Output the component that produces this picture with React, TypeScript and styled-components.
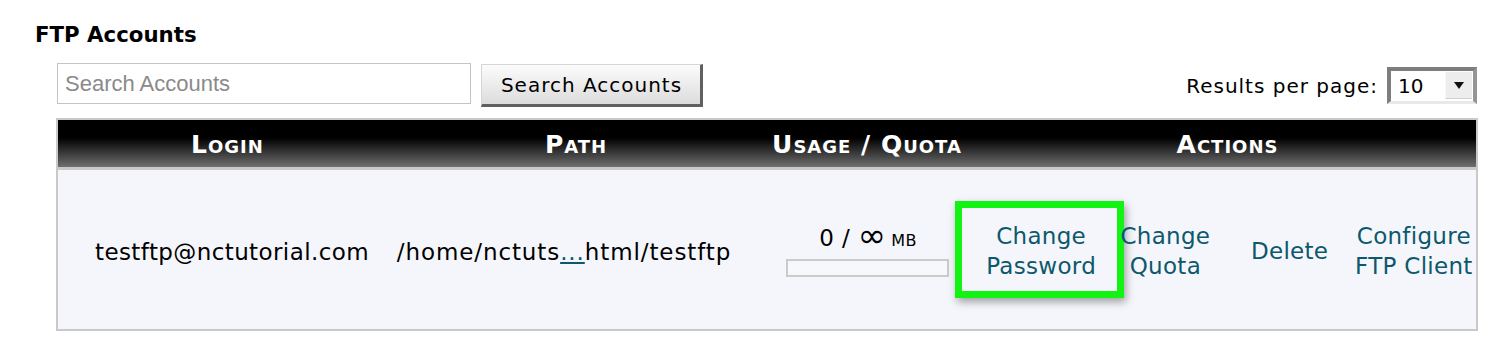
import React from 'react';
import styled, { createGlobalStyle } from 'styled-components';

const GlobalStyle = createGlobalStyle`
  html, body { margin: 0; padding: 0; background: #ffffff; }
  body { font-family: "DejaVu Sans", Verdana, sans-serif; color: #000; }
`;

const Page = styled.div`
  width: 1506px;
  height: 364px;
  box-sizing: border-box;
  padding-top: 22px;
  overflow: hidden;
`;

const Title = styled.h2`
  margin: 0 0 0 35px;
  font: bold 21.3px/26px "DejaVu Sans", Verdana, sans-serif;
  color: #000;
`;

const Content = styled.div`
  margin-left: 56px;
  width: 1422px;
`;

const Toolbar = styled.div`
  display: flex;
  align-items: center;
  height: 44px;
  margin-top: 15px;
  padding: 0 1px;
`;

const SearchInput = styled.input`
  box-sizing: border-box;
  width: 414px;
  height: 41px;
  margin: 0 0 3px 0;
  border: 1px solid #c4c4c4;
  padding: 0 7px;
  font: 22px "Liberation Sans", Arial, sans-serif;
  color: #000;
  background: #fff;
  outline: none;
  &::placeholder { color: #8a8a8a; opacity: 1; }
`;

const SearchButton = styled.button`
  box-sizing: border-box;
  width: 222px;
  height: 43px;
  margin-left: 10px;
  padding: 2px 0 0 1px;
  border-style: solid;
  border-width: 1px 3px 3px 1px;
  border-color: #d6d6d6 #606060 #606060 #d6d6d6;
  background: linear-gradient(#fcfcfc, #dcdcdc);
  font: 20px "DejaVu Sans", Verdana, sans-serif;
  letter-spacing: 1px;
  color: #000;
`;

const PerPage = styled.div`
  margin-left: auto;
  display: flex;
  align-items: center;
  gap: 9px;
`;

const PerPageLabel = styled.span`
  font: 20px "DejaVu Sans", Verdana, sans-serif;
  letter-spacing: 1px;
  padding-top: 2px;
`;

const SelectBox = styled.div`
  box-sizing: border-box;
  width: 90px;
  height: 37px;
  display: flex;
  align-items: center;
  background: #fff;
  border-style: solid;
  border-width: 4px 4px 3px 4px;
  border-color: #7e7e7e #959595 #e9e9e9 #7e7e7e;
`;

const SelectValue = styled.span`
  flex: 1;
  padding-left: 7px;
  font: 20px "DejaVu Sans", Verdana, sans-serif;
`;

const SelectArrow = styled.span`
  box-sizing: border-box;
  width: 27px;
  height: 27px;
  margin-right: 1px;
  display: flex;
  align-items: center;
  justify-content: center;
  background: #ededed;
  border-left: 1px solid #f8f8f8;
  border-bottom: 1px solid #d0d0d0;
`;

const Table = styled.div`
  margin-top: 11px;
  border: 2px solid #c9c9c9;
  display: grid;
  grid-template-columns: 339px 358px 224px 497px;
  background: #f5f6fb;
`;

const HeadCell = styled.div`
  box-sizing: border-box;
  height: 50px;
  padding-top: 2px;
  border-bottom: 3px solid #c9c9c9;
  background: linear-gradient(to bottom, #000 0%, #000 38%, #6f6f6f 100%);
  color: #fff;
  display: flex;
  align-items: center;
  justify-content: center;
  font: bold 25px "DejaVu Sans", Verdana, sans-serif;
  font-variant: small-caps;
  letter-spacing: 1px;
  white-space: nowrap;
`;

const BodyCell = styled.div<{ $padLeft?: number; $padRight?: number; $spacing?: number }>`
  box-sizing: border-box;
  height: 159px;
  display: flex;
  align-items: center;
  justify-content: center;
  padding-top: 6px;
  padding-left: ${(p) => p.$padLeft ?? 0}px;
  padding-right: ${(p) => p.$padRight ?? 0}px;
  font: 23px/27px "DejaVu Sans", Verdana, sans-serif;
  letter-spacing: ${(p) => p.$spacing ?? 0.4}px;
  white-space: nowrap;
  color: #000;
`;

const EllipsisLink = styled.a`
  color: #0d586c;
  text-decoration: underline;
`;

const Usage = styled.div`
  display: flex;
  flex-direction: column;
  align-items: center;
  margin-top: -4px;
`;

const UsageText = styled.span`
  word-spacing: 0;
  padding-left: 2px;
`;

const Infinity = styled.span`
  font-size: 34px;
  line-height: 0;
  vertical-align: -1px;
  margin-right: -3px;
`;

const Unit = styled.span`
  font-variant: small-caps;
`;

const Bar = styled.div`
  box-sizing: border-box;
  width: 163px;
  height: 18px;
  margin-top: 7px;
  border: 2px solid #cbcbcb;
  background: #f7f8fb;
`;

const Actions = styled.div`
  display: grid;
  grid-template-columns: repeat(4, 1fr);
  align-items: center;
  justify-items: center;
  height: 159px;
  padding-top: 2px;
  box-sizing: border-box;
`;

const ActionLink = styled.a<{ $highlight?: boolean }>`
  position: relative;
  text-align: center;
  white-space: nowrap;
  color: #0d586c;
  text-decoration: none;
  font: 23px/30px "DejaVu Sans", Verdana, sans-serif;
  letter-spacing: 0.3px;
  ${(p) =>
    p.$highlight
      ? `
    &::after {
      content: "";
      position: absolute;
      left: -31px;
      top: -20px;
      width: 169px;
      height: 97px;
      box-sizing: border-box;
      border: 7px solid #13f313;
      box-shadow: 2px 4px 8px rgba(0, 0, 0, 0.35);
      pointer-events: none;
    }
  `
      : ''}
`;

export default function App() {
  return (
    <Page>
      <GlobalStyle />
      <Title>FTP Accounts</Title>
      <Content>
        <Toolbar>
          <SearchInput placeholder="Search Accounts" />
          <SearchButton>Search Accounts</SearchButton>
          <PerPage>
            <PerPageLabel>Results per page:</PerPageLabel>
            <SelectBox>
              <SelectValue>10</SelectValue>
              <SelectArrow>
                <svg width="10" height="7" viewBox="0 0 10 7">
                  <path d="M0 0 L10 0 L5 7 Z" fill="#111" />
                </svg>
              </SelectArrow>
            </SelectBox>
          </PerPage>
        </Toolbar>
        <Table>
          <HeadCell>Login</HeadCell>
          <HeadCell>Path</HeadCell>
          <HeadCell>Usage / Quota</HeadCell>
          <HeadCell>Actions</HeadCell>

          <BodyCell $padLeft={9}>testftp@nctutorial.com</BodyCell>
          <BodyCell $padRight={24} $spacing={0.9}>
            /home/nctuts<EllipsisLink href="#">...</EllipsisLink>html/testftp
          </BodyCell>
          <BodyCell>
            <Usage>
              <UsageText>
                0 / <Infinity>∞</Infinity> <Unit>mb</Unit>
              </UsageText>
              <Bar />
            </Usage>
          </BodyCell>
          <Actions>
            <ActionLink href="#" $highlight>
              Change
              <br />
              Password
            </ActionLink>
            <ActionLink href="#">
              Change
              <br />
              Quota
            </ActionLink>
            <ActionLink href="#">Delete</ActionLink>
            <ActionLink href="#">
              Configure
              <br />
              FTP Client
            </ActionLink>
          </Actions>
        </Table>
      </Content>
    </Page>
  );
}
